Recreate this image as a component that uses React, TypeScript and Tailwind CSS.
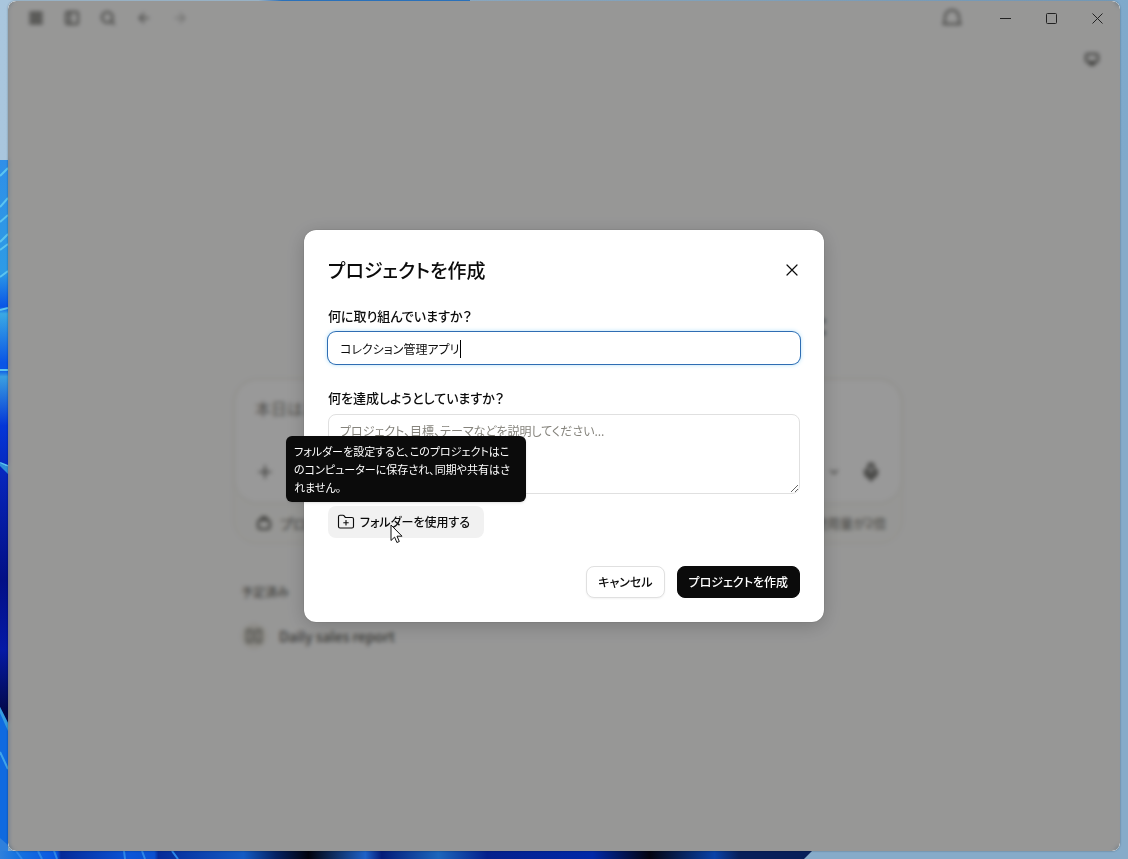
import {
  ArrowLeft,
  ArrowRight,
  ChevronDown,
  FolderPlus,
  Menu,
  Mic,
  PanelLeft,
  Plus,
  Search,
} from "lucide-react";

function Wallpaper() {
  return (
    <div className="absolute inset-0 overflow-hidden bg-[#86abc9]" aria-hidden="true">
      <div className="absolute inset-x-0 top-0 h-40 bg-linear-to-r from-[#a9c6dd] to-[#7fa9cb]" />
      <div className="absolute left-0 top-0 h-1 w-[470px] bg-linear-to-r from-[#a9c6dd] from-55% to-[#2f7fd0] to-60%" />
      <svg className="absolute left-0 top-0 h-full w-2" viewBox="0 0 8 859" preserveAspectRatio="none">
        <defs>
          <linearGradient id="petals" x1="0" y1="0" x2="0" y2="1">
            <stop offset="0" stopColor="#2f8fe8" />
            <stop offset="0.1" stopColor="#2e97e6" />
            <stop offset="0.16" stopColor="#2d9be6" />
            <stop offset="0.21" stopColor="#0a55e6" />
            <stop offset="0.22" stopColor="#3aa9e4" />
            <stop offset="0.29" stopColor="#0a55e6" />
            <stop offset="0.3" stopColor="#0a55e6" />
            <stop offset="0.31" stopColor="#3a9fe0" />
            <stop offset="0.38" stopColor="#0436d8" />
            <stop offset="0.46" stopColor="#0624b8" />
            <stop offset="0.6" stopColor="#020f86" />
            <stop offset="0.7" stopColor="#0519a6" />
            <stop offset="0.79" stopColor="#02094a" />
          </linearGradient>
        </defs>
        <rect y="160" width="8" height="699" fill="url(#petals)" />
        <g stroke="#5cc4f0" strokeWidth="2" fill="none">
          <path d="M0 176l8-8M0 207l8-9M0 222l8-7M0 242l8-8M0 250l8-6M0 277l8-6M0 310l8-2M0 370h8M0 463l8 3" />
        </g>
        <path d="M0 463l8 4v7l-8-8z" fill="#2f8fd8" />
        <path d="M0 707l8 16v136H0z" fill="#0f6ae0" />
        <path d="M0 707l8 16v8L0 713z" fill="#359ce0" />
        <path d="M0 752l8 17" stroke="#3fa4ea" strokeWidth="2" />
        <path d="M0 838l8 7v14H0z" fill="#2f80dc" />
      </svg>
      <svg className="absolute bottom-0 left-0 h-2 w-full" viewBox="0 0 1128 8" preserveAspectRatio="none">
        <defs>
          <linearGradient id="bottomPetals" x1="0" y1="0" x2="1" y2="0">
            <stop offset="0" stopColor="#2f80dc" />
            <stop offset="0.02" stopColor="#1573e0" />
            <stop offset="0.07" stopColor="#0a55e0" />
            <stop offset="0.075" stopColor="#052a98" />
            <stop offset="0.16" stopColor="#0b55d8" />
            <stop offset="0.19" stopColor="#0a50d0" />
            <stop offset="0.195" stopColor="#052a98" />
            <stop offset="0.3" stopColor="#135bc4" />
            <stop offset="0.34" stopColor="#052262" />
            <stop offset="0.38" stopColor="#01020c" />
            <stop offset="0.45" stopColor="#1f62c8" />
            <stop offset="0.47" stopColor="#041b78" />
            <stop offset="0.54" stopColor="#1c66bc" />
            <stop offset="0.6" stopColor="#05208c" />
            <stop offset="0.73" stopColor="#0029a8" />
            <stop offset="0.8" stopColor="#03030f" />
            <stop offset="0.88" stopColor="#0a42a8" />
            <stop offset="0.91" stopColor="#08205a" />
            <stop offset="1" stopColor="#08205a" />
          </linearGradient>
        </defs>
        <path d="M0 0h812l-8 8H0z" fill="url(#bottomPetals)" />
        <path d="M16 0l6 8M38 0l4 8M54 0l3 8M124 0l1 8M142 0l3 8M172 0l6 8" stroke="#2c86e8" strokeWidth="2" />
      </svg>
    </div>
  );
}

function TitleBar() {
  return (
    <header className="flex h-[34px] items-center justify-between pl-5 text-[#73736f]">
      <nav className="flex gap-5">
        <button type="button" aria-label="メニュー" className="block"><Menu size={16} strokeWidth={5} /></button>
        <button type="button" aria-label="サイドバー" className="block"><PanelLeft size={16} strokeWidth={3} /></button>
        <button type="button" aria-label="検索" className="block"><Search size={16} strokeWidth={3} /></button>
        <button type="button" aria-label="戻る" className="block"><ArrowLeft size={16} strokeWidth={2} /></button>
        <button type="button" aria-label="進む" className="block opacity-50"><ArrowRight size={16} strokeWidth={2} /></button>
      </nav>
      <div className="flex items-center">
        <button type="button" aria-label="お知らせ" className="mr-[18px] flex h-8 w-6 items-center justify-center">
          <svg width="20" height="20" viewBox="0 0 20 20" fill="none" stroke="currentColor" strokeWidth="2">
            <path d="M3 12V9a7 7 0 0 1 14 0v3l1.500 4h-17z" strokeLinejoin="round" />
          </svg>
        </button>
        <div className="relative z-20 flex text-[#222]">
          <button type="button" aria-label="最小化" className="flex h-8 w-[46px] items-center justify-center">
            <svg width="11" height="11" viewBox="0 0 11 11"><path d="M0 5.500h11" stroke="currentColor" /></svg>
          </button>
          <button type="button" aria-label="最大化" className="flex h-8 w-[46px] items-center justify-center">
            <svg width="11" height="11" viewBox="0 0 11 11" fill="none"><rect x="0.5" y="0.5" width="10" height="10" rx="1" stroke="currentColor" /></svg>
          </button>
          <button type="button" aria-label="ウィンドウを閉じる" className="flex h-8 w-[46px] items-center justify-center">
            <svg width="11" height="11" viewBox="0 0 11 11"><path d="M.5.5l10 10M10.500.5l-10 10" stroke="currentColor" /></svg>
          </button>
        </div>
      </div>
    </header>
  );
}

function HomePage() {
  return (
    <div className="flex flex-1 flex-col text-[#5c5c58]">
      <div className="flex h-12 items-center justify-end pr-5">
        <button type="button" aria-label="画面" className="block">
          <svg width="16" height="16" viewBox="0 0 16 16" fill="none" stroke="currentColor" strokeWidth="2">
            <rect x="2" y="3" width="12" height="8" rx="2" />
            <path d="M5 13h6" strokeWidth="3" />
          </svg>
        </button>
      </div>
      <main className="flex flex-1 flex-col items-center justify-center pl-2 pt-4">
        <div className="w-full max-w-[670px]">
          <div className="flex h-10 items-center justify-end pr-[76px] text-3xl" aria-hidden="true">:</div>
          <section className="mt-9 rounded-3xl border border-[#efede5] bg-[#fbfbf8]">
            <div className="flex h-31 flex-col justify-between rounded-3xl border border-[#f4f3ef] bg-white px-5 pt-3 pb-5 shadow-xs">
              <p className="pt-1 text-base leading-6 text-[#85837c]">本日はど</p>
              <div className="flex items-center justify-between">
                <button type="button" aria-label="追加" className="block"><Plus size={20} /></button>
                <div className="flex items-center gap-5">
                  <ChevronDown size={14} />
                  <button type="button" aria-label="音声入力" className="block"><Mic size={20} strokeWidth={3} /></button>
                </div>
              </div>
            </div>
            <div className="flex h-10 items-center justify-between px-4 text-sm">
              <span className="flex items-center gap-2 pl-1.5">
                <svg width="16" height="16" viewBox="0 0 16 16" fill="none" stroke="currentColor" strokeWidth="2">
                  <rect x="2" y="5" width="12" height="9" rx="3" />
                  <path d="M5 5c0-4 6-4 6 0" />
                </svg>
                プロジェ
              </span>
              <span className="text-[13px] text-[#73726c]">使用量が2倍</span>
            </div>
          </section>
          <section className="mt-10 px-2">
            <h2 className="text-xs leading-4 font-medium text-[#73726c]">予定済み</h2>
            <a href="#daily" className="mt-6 flex h-6 items-center gap-3 text-sm font-medium">
              <span className="flex size-[26px] items-center justify-center rounded-full bg-[#efede6]">
                <svg width="18" height="18" viewBox="0 0 18 18" fill="none" stroke="#8a8982" strokeWidth="2">
                  <path d="M2 3h5v12H2zM11 3h5v12h-5z" />
                </svg>
              </span>
              Daily sales report
            </a>
          </section>
        </div>
      </main>
    </div>
  );
}

function Tooltip() {
  return (
    <div
      role="tooltip"
      id="folder-tip"
      className="absolute bottom-full left-1/2 mb-1 w-60 -translate-x-1/2 rounded-md bg-[#0b0b0b] px-2 py-1.5 text-[11px] leading-[18px] whitespace-nowrap text-white shadow-sm"
    >
      フォルダーを設定すると、このプロジェクトはこ
      <br />
      のコンピューターに保存され、同期や共有はさ
      <br />
      れません。
    </div>
  );
}

function ProjectDialog() {
  return (
    <form
      role="dialog"
      aria-labelledby="dialog-title"
      className="w-full max-w-[520px] rounded-xl bg-white p-6 text-[#0b0b0b] shadow-[0_0_1px_#0008,0_4px_20px_#0003]"
    >
      <div className="flex h-8 items-center justify-between">
        <h1 id="dialog-title" className="text-[19px] font-medium">プロジェクトを作成</h1>
        <button type="button" aria-label="閉じる" className="flex size-4 items-center justify-center">
          <svg width="12" height="12" viewBox="0 0 12 12" fill="none" stroke="currentColor" strokeWidth="1.2" strokeLinecap="round">
            <path d="M1 1l10 10M11 1L1 11" />
          </svg>
        </button>
      </div>

      <label htmlFor="name" className="mt-5 block text-[13px] leading-5 font-medium">何に取り組んでいますか？</label>
      <div className="relative mt-1.5">
        <input
          id="name"
          type="text"
          defaultValue="コレクション管理アプリ"
          className="block h-8 w-full rounded-lg px-3 text-xs caret-transparent shadow-[0_0_5px_#8fd0f5] ring-1 ring-[#2f6db3] outline-none"
        />
        <span className="absolute left-[132px] top-2 h-[18px] w-px bg-black" />
      </div>

      <label htmlFor="goal" className="mt-6 block text-[13px] leading-5 font-medium">何を達成しようとしていますか？</label>
      <textarea
        id="goal"
        placeholder="プロジェクト、目標、テーマなどを説明してください..."
        className="mt-1.5 block h-20 w-full resize rounded-lg border border-[#e0e0e0] px-[11px] py-1.5 text-xs leading-5 outline-none placeholder:text-[#85837c]"
      />

      <div className="relative mt-3 w-fit">
        <button
          type="button"
          aria-describedby="folder-tip"
          className="flex h-8 items-center gap-1 rounded-lg bg-[#f1f1f1] pr-3 pl-[9px] text-[12px] font-medium"
        >
          <FolderPlus size={18} strokeWidth={1.5} className="mr-px" />
          <span className="pr-0.5">フォルダーを使用する</span>
        </button>
        <Tooltip />
        <svg className="absolute left-[62px] top-[18px]" width="13" height="20" viewBox="0 0 13 20" aria-hidden="true">
          <path d="M1 1v15.500l3.600-3.400 2.300 5.400 2.400-1-2.300-5.300h5z" fill="#fff" stroke="#111" />
        </svg>
      </div>

      <div className="mt-7 flex justify-end gap-3">
        <button type="button" className="h-8 rounded-lg border border-[#e0e0e0] bg-white px-[11px] text-xs font-medium shadow-xs">
          キャンセル
        </button>
        <button type="submit" className="h-8 rounded-lg border border-[#0b0b0b] bg-[#0b0b0b] px-[11px] text-xs font-medium text-white">
          プロジェクトを作成
        </button>
      </div>
    </form>
  );
}

export default function App() {
  return (
    <div
      lang="ja"
      className="relative flex min-h-screen pt-px pr-2 pb-2 pl-2 font-['Noto_Sans_CJK_JP','Noto_Sans',sans-serif] [font-feature-settings:'palt']"
    >
      <Wallpaper />
      <div className="relative flex flex-1 flex-col overflow-hidden rounded-lg bg-[#fcfcfb] shadow-[0_0_2px_#0006]">
        <TitleBar />
        <HomePage />
        <div className="absolute inset-0 z-10 flex items-center justify-center rounded-lg bg-black/40 backdrop-blur-[2px]">
          <ProjectDialog />
        </div>
      </div>
    </div>
  );
}
